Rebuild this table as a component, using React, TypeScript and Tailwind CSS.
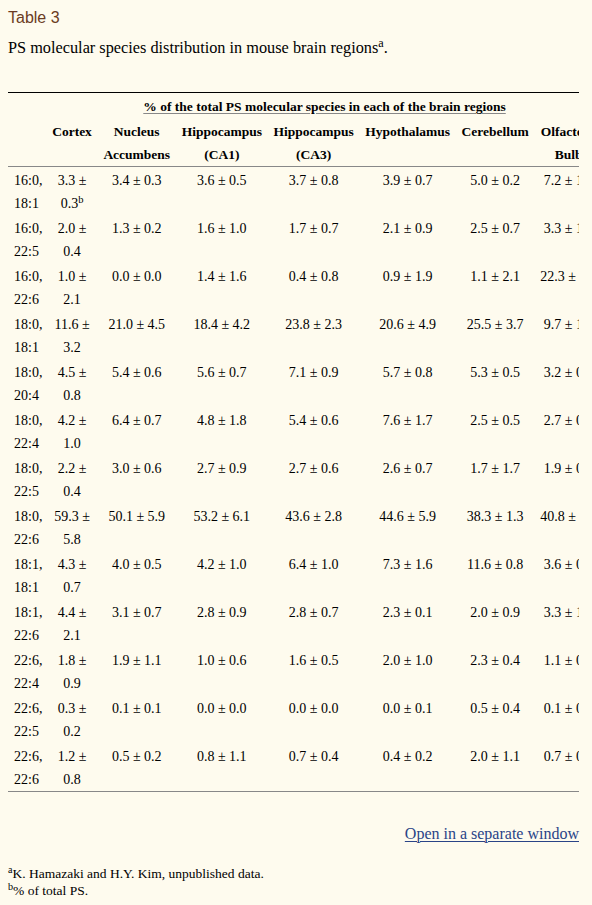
const serif = { fontFamily: '"Liberation Serif", "Times New Roman", serif' }

// [Fettsäuren, Cortex, Nucleus Acc., CA1, CA3, Hypothalamus, Cerebellum, Olfactory Bulb]
const ZEILEN: string[][] = [
  ['16:0, 18:1', '3.3 ± 0.3', '3.4 ± 0.3', '3.6 ± 0.5', '3.7 ± 0.8', '3.9 ± 0.7', '5.0 ± 0.2', '7.2 ± 1.4'],
  ['16:0, 22:5', '2.0 ± 0.4', '1.3 ± 0.2', '1.6 ± 1.0', '1.7 ± 0.7', '2.1 ± 0.9', '2.5 ± 0.7', '3.3 ± 1.2'],
  ['16:0, 22:6', '1.0 ± 2.1', '0.0 ± 0.0', '1.4 ± 1.6', '0.4 ± 0.8', '0.9 ± 1.9', '1.1 ± 2.1', '22.3 ± 4.1'],
  ['18:0, 18:1', '11.6 ± 3.2', '21.0 ± 4.5', '18.4 ± 4.2', '23.8 ± 2.3', '20.6 ± 4.9', '25.5 ± 3.7', '9.7 ± 1.5'],
  ['18:0, 20:4', '4.5 ± 0.8', '5.4 ± 0.6', '5.6 ± 0.7', '7.1 ± 0.9', '5.7 ± 0.8', '5.3 ± 0.5', '3.2 ± 0.6'],
  ['18:0, 22:4', '4.2 ± 1.0', '6.4 ± 0.7', '4.8 ± 1.8', '5.4 ± 0.6', '7.6 ± 1.7', '2.5 ± 0.5', '2.7 ± 0.8'],
  ['18:0, 22:5', '2.2 ± 0.4', '3.0 ± 0.6', '2.7 ± 0.9', '2.7 ± 0.6', '2.6 ± 0.7', '1.7 ± 1.7', '1.9 ± 0.4'],
  ['18:0, 22:6', '59.3 ± 5.8', '50.1 ± 5.9', '53.2 ± 6.1', '43.6 ± 2.8', '44.6 ± 5.9', '38.3 ± 1.3', '40.8 ± 3.3'],
  ['18:1, 18:1', '4.3 ± 0.7', '4.0 ± 0.5', '4.2 ± 1.0', '6.4 ± 1.0', '7.3 ± 1.6', '11.6 ± 0.8', '3.6 ± 0.9'],
  ['18:1, 22:6', '4.4 ± 2.1', '3.1 ± 0.7', '2.8 ± 0.9', '2.8 ± 0.7', '2.3 ± 0.1', '2.0 ± 0.9', '3.3 ± 1.0'],
  ['22:6, 22:4', '1.8 ± 0.9', '1.9 ± 1.1', '1.0 ± 0.6', '1.6 ± 0.5', '2.0 ± 1.0', '2.3 ± 0.4', '1.1 ± 0.3'],
  ['22:6, 22:5', '0.3 ± 0.2', '0.1 ± 0.1', '0.0 ± 0.0', '0.0 ± 0.0', '0.0 ± 0.1', '0.5 ± 0.4', '0.1 ± 0.1'],
  ['22:6, 22:6', '1.2 ± 0.8', '0.5 ± 0.2', '0.8 ± 1.1', '0.7 ± 0.4', '0.4 ± 0.2', '2.0 ± 1.1', '0.7 ± 0.2'],
]

const KOPF = ['Cortex', 'Nucleus Accumbens', 'Hippocampus (CA1)', 'Hippocampus (CA3)', 'Hypothalamus', 'Cerebellum', 'Olfactory Bulb']

const zelle = 'px-[5.75px] pt-[2px] pb-0 align-top leading-[23px]'
const ersteSpalte = 'pl-[6px] pr-[4px] pt-[2px] pb-0 align-top leading-[23px]'

export default function App() {
  return (
    <div className="min-h-screen bg-[#fefbee] pb-4 pl-2 pr-[13px] pt-2 text-black">
      <h2
        className="text-[16px] font-normal leading-[20px] text-[#6b3b22]"
        style={{ fontFamily: '"Liberation Sans", Arial, sans-serif' }}
      >
        Table 3
      </h2>
      <p className="mt-[10px] text-[16.3px] leading-[20px]" style={serif}>
        PS molecular species distribution in mouse brain regions<sup>a</sup>.
      </p>

      <div className="mt-[34px] overflow-hidden border-t border-black" style={serif}>
        <table className="w-px border-collapse text-[14px]">
          <thead className="text-[13.5px]">
            <tr>
              <th className={ersteSpalte} />
              <th colSpan={7} className={`${zelle} whitespace-nowrap text-center font-bold`}>
                <span className="underline decoration-[#888] decoration-1 underline-offset-2">
                  % of the total PS molecular species in each of the brain regions
                </span>
              </th>
            </tr>
            <tr className="border-b border-[#888]">
              <th className={ersteSpalte} />
              {KOPF.map((k) => (
                <th key={k} className={`${zelle} text-center font-bold`}>
                  {k}
                </th>
              ))}
            </tr>
          </thead>
          <tbody>
            {ZEILEN.map((z, i) => (
              <tr key={z[0]} className={i === ZEILEN.length - 1 ? 'border-b border-[#888]' : ''}>
                <td className={`${ersteSpalte} text-left`}>{z[0]}</td>
                {z.slice(1).map((w, j) => (
                  <td key={j} className={`${zelle} text-center ${j === 6 ? 'whitespace-nowrap' : ''}`}>
                    {w}
                    {i === 0 && j === 0 && <sup>b</sup>}
                  </td>
                ))}
              </tr>
            ))}
          </tbody>
        </table>
      </div>

      <div className="mt-[32px] text-right text-[16px] leading-[20px]" style={serif}>
        <a href="#" className="text-[#2a4487] underline decoration-1 underline-offset-2">
          Open in a separate window
        </a>
      </div>

      <div className="mt-[21px] text-[13.5px] leading-[17px]" style={serif}>
        <div>
          <sup>a</sup>K. Hamazaki and H.Y. Kim, unpublished data.
        </div>
        <div>
          <sup>b</sup>% of total PS.
        </div>
      </div>
    </div>
  )
}
